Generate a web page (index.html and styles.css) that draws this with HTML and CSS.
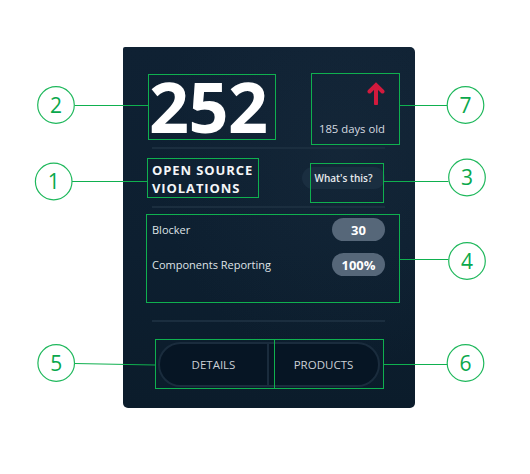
FILE: index.html
```html
<!DOCTYPE html>
<html lang="en">
<head>
<meta charset="utf-8">
<title>Open Source Violations</title>
<link rel="stylesheet" href="styles.css">
</head>
<body>
<div class="stage">
  <section class="card">
    <div class="top">
      <div class="count">252</div>
      <div class="age">
        <svg class="arrow" width="18" height="24" viewBox="0 0 18 24" aria-hidden="true">
          <path d="M9 22.5V4.5M2.5 10.5L9 4L15.5 10.5" fill="none" stroke="#d21a3d" stroke-width="4" stroke-linecap="round" stroke-linejoin="miter"/>
        </svg>
        <span class="age-text">185 days old</span>
      </div>
    </div>
    <div class="sep"></div>
    <div class="head">
      <h2 class="title">OPEN SOURCE<br>VIOLATIONS</h2>
      <button class="help">What's this?</button>
    </div>
    <div class="sep"></div>
    <div class="stats">
      <div class="stat"><span>Blocker</span><span class="badge">30</span></div>
      <div class="stat"><span>Components Reporting</span><span class="badge">100%</span></div>
    </div>
    <div class="sep"></div>
    <div class="actions">
      <div class="btn-group">
        <button class="btn">DETAILS</button>
        <button class="btn">PRODUCTS</button>
      </div>
    </div>
  </section>

  <svg class="notes" width="530" height="474" viewBox="0 0 530 474" aria-hidden="true">
    <g class="boxes">
      <rect x="148.5" y="74.5" width="127" height="65"/>
      <rect x="311.5" y="73.5" width="88" height="71"/>
      <rect x="147.5" y="158.5" width="111" height="39"/>
      <rect x="310.5" y="163.5" width="73" height="39"/>
      <rect x="146.5" y="214.5" width="253" height="88"/>
      <rect x="155.5" y="339.5" width="119" height="49"/>
      <rect x="274.5" y="339.5" width="109" height="49"/>
    </g>
    <g class="leads">
      <line x1="74.5" y1="105.5" x2="148" y2="105.5"/>
      <line x1="72" y1="181.5" x2="147" y2="181.5"/>
      <line x1="399" y1="105.5" x2="447" y2="105.5"/>
      <line x1="383" y1="181.5" x2="448.5" y2="181.5"/>
      <line x1="399" y1="259.5" x2="448.5" y2="259.5"/>
      <line x1="74.5" y1="363.5" x2="155" y2="365"/>
      <line x1="383" y1="364.5" x2="447" y2="364.5"/>
    </g>
    <g class="marks">
      <circle cx="56" cy="105" r="18.3"/>
      <circle cx="53.7" cy="181.5" r="18.3"/>
      <circle cx="465.5" cy="105" r="18.3"/>
      <circle cx="467" cy="177.5" r="18.3"/>
      <circle cx="467" cy="261" r="18.3"/>
      <circle cx="56.2" cy="363" r="18.3"/>
      <circle cx="465.5" cy="363" r="18.3"/>
    </g>
    <g class="nums">
      <text x="56" y="112.5">2</text>
      <text x="53.7" y="189">1</text>
      <text x="465.5" y="112.5">7</text>
      <text x="467" y="185">3</text>
      <text x="467" y="268.5">4</text>
      <text x="56.2" y="370.5">5</text>
      <text x="465.5" y="370.5">6</text>
    </g>
  </svg>
</div>
</body>
</html>
```

FILE: styles.css
```css
* { box-sizing: border-box; }

html, body {
  margin: 0;
  background: #ffffff;
}

.stage {
  position: relative;
  width: 530px;
  height: 474px;
  padding: 47px 0 0 123px;
  font-family: "Open Sans", "Noto Sans", sans-serif;
}

.card {
  width: 292px;
  height: 361px;
  padding: 24px 30px 0 29px;
  border-radius: 2px 5px 5px 5px;
  background:
    radial-gradient(ellipse at 75% 30%, rgba(40, 60, 78, 0.22), rgba(40, 60, 78, 0) 60%),
    linear-gradient(180deg, #0f2133 0%, #0d1f30 55%, #0b1c2b 100%);
  color: #ffffff;
}

.top {
  display: flex;
  justify-content: space-between;
  height: 76px;
}

.count {
  font-weight: 700;
  font-size: 70px;
  line-height: 70px;
  color: #ffffff;
  margin-left: -3px;
  letter-spacing: -0.5px;
}

.age {
  display: flex;
  flex-direction: column;
  align-items: flex-end;
}

.arrow {
  display: block;
  margin-top: 10px;
}

.age-text {
  margin-top: 16px;
  font-size: 11.3px;
  line-height: 15px;
  color: #d6dbe0;
}

.sep {
  height: 2px;
  background: #1b2e3f;
}

.head {
  display: flex;
  justify-content: space-between;
  align-items: center;
  padding: 12px 0 9px;
}

.title {
  margin: 0;
  font-size: 13px;
  line-height: 18px;
  font-weight: 700;
  letter-spacing: 0.9px;
  color: #f4f6f8;
}

.help {
  width: 83px;
  height: 22px;
  padding: 0;
  border: none;
  border-radius: 11px;
  background: #1a2e40;
  color: #e8ebee;
  font-family: inherit;
  font-size: 10px;
  font-weight: 600;
  margin-top: -2px;
}

.stats {
  display: flex;
  flex-direction: column;
  gap: 12px;
  padding: 10px 0 44px;
}

.stat {
  display: flex;
  justify-content: space-between;
  align-items: center;
  font-size: 11px;
  color: #dfe3e7;
}

.badge {
  display: flex;
  align-items: center;
  justify-content: center;
  width: 53px;
  height: 23px;
  border-radius: 12px;
  background: #566779;
  color: #ffffff;
  font-size: 13px;
  font-weight: 700;
}

.actions {
  padding: 20px 5px 0 6px;
}

.btn-group {
  display: grid;
  grid-template-columns: 1fr 1fr;
  height: 45px;
  border: 2px solid #1a2c3d;
  border-radius: 23px;
  background: #061524;
  overflow: hidden;
}

.btn {
  padding: 0;
  border: none;
  background: transparent;
  color: #cbd0d6;
  font-family: inherit;
  font-size: 11.5px;
}

.btn:first-child {
  border-right: 2px solid #1a2c3d;
}

.notes {
  position: absolute;
  left: 0;
  top: 0;
  pointer-events: none;
}

.boxes rect {
  fill: none;
  stroke: #0fb04f;
  stroke-width: 1;
}

.leads line {
  stroke: #0fb04f;
  stroke-width: 1;
}

.marks circle {
  fill: #ffffff;
  stroke: #1fb85c;
  stroke-width: 1.2;
}

.nums text {
  font-family: "Open Sans", "Noto Sans", sans-serif;
  font-size: 21px;
  fill: #0aa84c;
  text-anchor: middle;
}
```
